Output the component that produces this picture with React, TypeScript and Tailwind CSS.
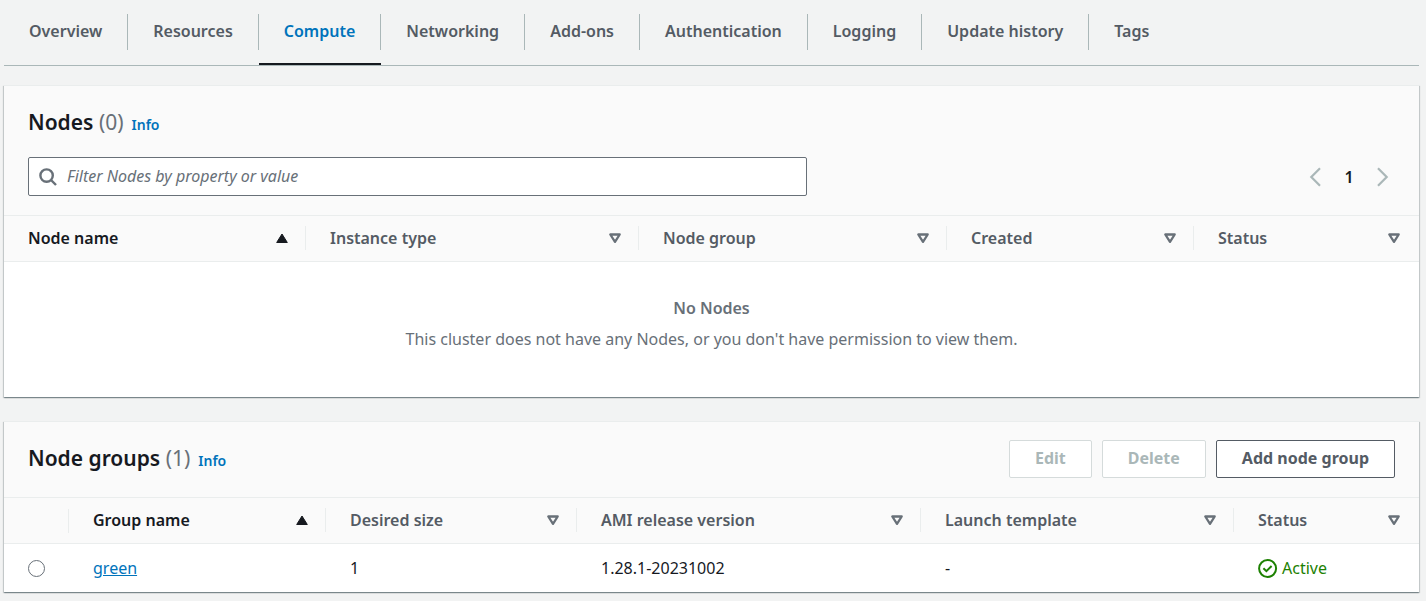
import React, { useState } from "react";
import clsx from "clsx";

const tabs = [
  "Overview",
  "Resources",
  "Compute",
  "Networking",
  "Add-ons",
  "Authentication",
  "Logging",
  "Update history",
  "Tags",
];

type Column = { label: string; width: string; sorted?: boolean };

const nodeColumns: Column[] = [
  { label: "Node name", width: "w-[302px]", sorted: true },
  { label: "Instance type", width: "w-[333px]" },
  { label: "Node group", width: "w-[308px]" },
  { label: "Created", width: "w-[247px]" },
  { label: "Status", width: "w-[225px]" },
];

const groupColumns: Column[] = [
  { label: "Group name", width: "w-[257px]", sorted: true },
  { label: "Desired size", width: "w-[251px]" },
  { label: "AMI release version", width: "w-[344px]" },
  { label: "Launch template", width: "w-[313px]" },
  { label: "Status", width: "w-[185px]" },
];

function SortIcon({ sorted }: { sorted?: boolean }) {
  return sorted ? (
    <svg viewBox="0 0 14 12" className="h-3 w-3.5 shrink-0 text-[#16191f]" aria-hidden="true">
      <path d="M7 2 12.3 10.5H1.7Z" fill="currentColor" stroke="currentColor" strokeLinejoin="round" />
    </svg>
  ) : (
    <svg viewBox="0 0 14 12" className="h-3 w-3.5 shrink-0 text-[#687078]" aria-hidden="true">
      <path d="M2.3 2.5H11.7L7 9.9Z" fill="none" stroke="currentColor" strokeWidth="2.3" strokeLinejoin="round" />
    </svg>
  );
}

function HeaderCell({ column, last }: { column: Column; last: boolean }) {
  return (
    <th
      scope="col"
      aria-sort={column.sorted ? "ascending" : "none"}
      className={clsx("border-y border-[#eaeded] p-0 pt-2.5 pb-[11px] text-left", column.width)}
    >
      <button
        type="button"
        className={clsx(
          "flex h-6 w-full items-center justify-between pl-6 font-semibold",
          last ? "pr-[18px]" : "border-r border-[#eaeded] pr-4",
          column.sorted ? "text-[#16191f]" : "text-[#545b64]",
        )}
      >
        {column.label}
        <SortIcon sorted={column.sorted} />
      </button>
    </th>
  );
}

function Title({ text, count }: { text: string; count: number }) {
  return (
    <div className="flex items-baseline">
      <h2 className="text-[21px] leading-7 font-semibold text-[#16191f]">
        {text} <span className="font-normal text-[#687078]">({count})</span>
      </h2>
      <a href="#info" className="ml-2 text-[14px] leading-5 font-semibold text-[#0073bb]">
        Info
      </a>
    </div>
  );
}

function Panel({ children }: { children: React.ReactNode }) {
  return (
    <section className="border-t border-[#eaeded] bg-white shadow-[0_1px_1px_0_rgba(0,28,36,0.3),1px_1px_1px_0_rgba(0,28,36,0.15),-1px_1px_1px_0_rgba(0,28,36,0.15)]">
      {children}
    </section>
  );
}

function PageButton({ label, path }: { label: string; path: string }) {
  return (
    <button type="button" disabled aria-label={label} className="text-[#aab7b8]">
      <svg viewBox="0 0 20 20" className="size-5" fill="none" stroke="currentColor" strokeWidth="2.2" aria-hidden="true">
        <path d={path} />
      </svg>
    </button>
  );
}

export default function App() {
  const [active, setActive] = useState("Compute");
  const [filter, setFilter] = useState("");

  return (
    <main className="min-h-screen bg-[#f2f3f3] pr-[7px] pb-2 pl-1 font-['Noto_Sans',sans-serif] text-[16px] leading-6 text-[#16191f]">
      <nav role="tablist" className="flex border-b border-[#aab7b8]">
        {tabs.map((tab, i) => (
          <button
            key={tab}
            type="button"
            role="tab"
            aria-selected={tab === active}
            onClick={() => setActive(tab)}
            className={clsx(
              "border-b-2 pt-3.5 pb-[13px] font-semibold",
              tab === active ? "border-[#16191f] text-[#0073bb]" : "border-transparent text-[#545b64]",
            )}
          >
            <span
              className={clsx(
                "flex h-9 items-center px-[25px] pb-0.5",
                i < tabs.length - 1 && "border-r border-[#aab7b8]",
              )}
            >
              {tab}
            </span>
          </button>
        ))}
      </nav>

      <div className="mt-[19px] flex flex-col gap-6">
        <Panel>
          <header className="bg-[#fafafa] px-6 pt-[22px] pb-[19px]">
            <Title text="Nodes" count={0} />
            <div className="mt-[21px] flex items-center justify-between">
              <label className="flex h-[39px] w-[57%] items-center gap-2.5 rounded-xs border border-[#687078] bg-white px-2.5">
                <svg
                  viewBox="0 0 18 18"
                  className="size-[18px] shrink-0 text-[#687078]"
                  fill="none"
                  stroke="currentColor"
                  strokeWidth="2.4"
                  aria-hidden="true"
                >
                  <circle cx="7.6" cy="7.6" r="6.2" />
                  <path d="m12 12 5 5" />
                </svg>
                <input
                  type="text"
                  aria-label="Filter Nodes"
                  value={filter}
                  onChange={(e) => setFilter(e.target.value)}
                  placeholder="Filter Nodes by property or value"
                  className="w-full pb-0.5 outline-none placeholder:text-[#687078] placeholder:italic"
                />
              </label>
              <div className="flex items-center pr-[3px]">
                <PageButton label="Previous page" path="M14 1.3 5.3 10 14 18.7" />
                <button type="button" aria-current="page" className="w-[46px] text-center font-semibold">
                  1
                </button>
                <PageButton label="Next page" path="M6 1.3 14.7 10 6 18.7" />
              </div>
            </div>
          </header>
          <table className="w-full table-fixed border-separate border-spacing-0">
            <thead className="bg-[#fafafa]">
              <tr>
                {nodeColumns.map((column, i) => (
                  <HeaderCell key={column.label} column={column} last={i === nodeColumns.length - 1} />
                ))}
              </tr>
            </thead>
            <tbody>
              <tr>
                <td colSpan={5} className="px-6 pt-[34px] pb-[46px] text-center text-[#687078]">
                  <p className="font-semibold">No Nodes</p>
                  <p className="mt-[7px]">
                    This cluster does not have any Nodes, or you don't have permission to view them.
                  </p>
                </td>
              </tr>
            </tbody>
          </table>
        </Panel>

        <Panel>
          <header className="flex items-start justify-between bg-[#fafafa] px-6 pt-[18px] pb-[19px]">
            <div className="pt-1">
              <Title text="Node groups" count={1} />
            </div>
            <div className="flex gap-2.5 font-bold">
              <button
                type="button"
                disabled
                className="h-[38px] rounded-xs border border-[#d5dbdb] bg-white px-[25px] pb-0.5 text-[#aab7b8]"
              >
                Edit
              </button>
              <button
                type="button"
                disabled
                className="h-[38px] rounded-xs border border-[#d5dbdb] bg-white px-[25px] pb-0.5 text-[#aab7b8]"
              >
                Delete
              </button>
              <button
                type="button"
                className="h-[38px] rounded-xs border border-[#545b64] bg-white px-[25px] pb-0.5 text-[#545b64]"
              >
                Add node group
              </button>
            </div>
          </header>
          <table className="w-full table-fixed border-separate border-spacing-0">
            <thead className="bg-[#fafafa]">
              <tr>
                <td className="w-[65px] border-y border-[#eaeded] p-0">
                  <div className="h-6 border-r border-[#eaeded]" />
                </td>
                {groupColumns.map((column, i) => (
                  <HeaderCell key={column.label} column={column} last={i === groupColumns.length - 1} />
                ))}
              </tr>
            </thead>
            <tbody>
              <tr className="h-12">
                <td className="pl-6">
                  <input
                    type="radio"
                    name="node-group"
                    aria-label="Select green"
                    className="block size-[17px] appearance-none rounded-full border border-[#687078] bg-white checked:border-[5px] checked:border-[#0073bb]"
                  />
                </td>
                <td className="pl-6">
                  <a href="#green" className="text-[#0073bb] underline">
                    green
                  </a>
                </td>
                <td className="pl-6">1</td>
                <td className="pl-6">1.28.1-20231002</td>
                <td className="pl-6">-</td>
                <td className="pl-6">
                  <span className="flex items-center gap-1 text-[#1d8102]">
                    <svg
                      viewBox="0 0 20 20"
                      className="size-5 shrink-0"
                      fill="none"
                      stroke="currentColor"
                      strokeWidth="2"
                      aria-hidden="true"
                    >
                      <circle cx="9.6" cy="10.5" r="8.5" />
                      <path d="m5.4 10.2 3 3 5.2-5.2" />
                    </svg>
                    Active
                  </span>
                </td>
              </tr>
            </tbody>
          </table>
        </Panel>
      </div>
    </main>
  );
}
